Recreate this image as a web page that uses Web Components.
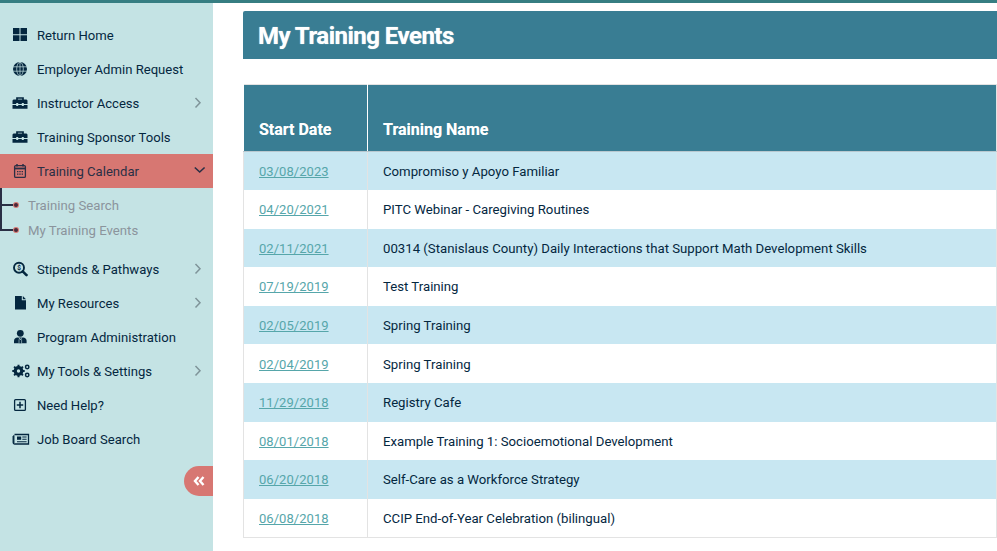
<!DOCTYPE html>
<html><head><meta charset="utf-8"><title>My Training Events</title>
<style>html,body{margin:0;padding:0;height:100%;overflow:hidden;background:#fff;font-family:Roboto,"Liberation Sans",sans-serif}</style>
</head><body>
<app-shell>
<side-nav slot="nav">
<nav-item label="Return Home" icon="grid"></nav-item>
<nav-item label="Employer Admin Request" icon="globe"></nav-item>
<nav-item label="Instructor Access" icon="toolbox" chevron="right"></nav-item>
<nav-item label="Training Sponsor Tools" icon="toolbox"></nav-item>
<nav-item label="Training Calendar" icon="calendar" chevron="down" active></nav-item>
<sub-nav><sub-item>Training Search</sub-item><sub-item>My Training Events</sub-item></sub-nav>
<nav-item label="Stipends &amp; Pathways" icon="search" chevron="right"></nav-item>
<nav-item label="My Resources" icon="file" chevron="right"></nav-item>
<nav-item label="Program Administration" icon="user"></nav-item>
<nav-item label="My Tools &amp; Settings" icon="cogs" chevron="right"></nav-item>
<nav-item label="Need Help?" icon="plus"></nav-item>
<nav-item label="Job Board Search" icon="news"></nav-item>
</side-nav>
<main-panel>
<page-title>My Training Events</page-title>
<events-table></events-table>
</main-panel>
</app-shell>
<script>
const ICONS={
grid:'<path d="M2 3h6.500v6.300H2zM9.500 3H16v6.300H9.500zM2 10.300h6.500V16H2zM9.500 10.300H16V16H9.500z" fill="#04273f"/>',
globe:'<circle cx="9" cy="10" r="7" fill="#04273f"/><path d="M2 7.800h14M2 12.200h14M9 3v14" stroke="#c4e3e4" stroke-width=".7"/><ellipse cx="9" cy="10" rx="3.300" ry="6.800" fill="none" stroke="#c4e3e4" stroke-width=".7"/>',
toolbox:'<path d="M6 7V5h6v2" fill="none" stroke="#04273f" stroke-width="1.700"/><path d="M2.500 6.500h13l1 1V11h-3.700v-1h-2v1H7.200v-1h-2v1H1.500V7.500z" fill="#04273f"/><path d="M1.500 12h3.700v1h2v-1h3.600v1h2v-1h3.700v3.800h-15z" fill="#04273f"/>',
calendar:'<rect x="3.600" y="4.600" width="10.800" height="11.800" rx="1.200" fill="none" stroke="#2a2f45" stroke-width="1.300"/><path d="M3 7.500h12" stroke="#2a2f45" stroke-width="1.800"/><path d="M6 3v2.500M12 3v2.500" stroke="#2a2f45" stroke-width="1.500"/><path d="M6 10h1.400v1.300H6zM8.300 10h1.400v1.300H8.300zM10.600 10h1.400v1.300h-1.400zM6 12.500h1.400v1.300H6zM8.300 12.500h1.400v1.300H8.300zM10.600 12.500h1.400v1.300h-1.400z" fill="#2a2f45"/>',
search:'<circle cx="8" cy="8.700" r="5" fill="none" stroke="#04273f" stroke-width="1.900"/><path d="M11.700 12.400l3.800 3.800" stroke="#04273f" stroke-width="2.600" stroke-linecap="round"/><text x="8" y="11" font-size="6.500" font-weight="700" font-family="Roboto" text-anchor="middle" fill="#04273f">$</text>',
file:'<path d="M4 3h6.800v4.200H15V16.500H4z" fill="#04273f"/><path d="M11.800 3L15 6.200h-3.200z" fill="#04273f"/>',
user:'<circle cx="9.300" cy="6.300" r="3.400" fill="#04273f"/><path d="M3 16.200v-2.400c0-2 1.600-3.300 3.500-3.300h5.600c1.900 0 3.500 1.300 3.500 3.300v2.400z" fill="#04273f"/><path d="M7.800 10.600l1.500 2.200 1.500-2.200" fill="none" stroke="#c4e3e4" stroke-width=".8"/><path d="M9.300 13v3.200" stroke="#04273f" stroke-width="1.600"/><path d="M8 12.300v3.900M10.600 12.300v3.900" stroke="#c4e3e4" stroke-width=".6"/>',
cogs:'<circle cx="7.500" cy="10" r="3.500" fill="none" stroke="#04273f" stroke-width="2.800"/><path d="M7.500 3.800v12.400M1.300 10h12.400M3.100 5.600l8.800 8.800M11.900 5.600l-8.800 8.800" stroke="#04273f" stroke-width="2"/><circle cx="7.500" cy="10" r="1.700" fill="#c4e3e4"/><circle cx="16.200" cy="6" r="1.700" fill="none" stroke="#04273f" stroke-width="1.500"/><circle cx="16.200" cy="14" r="1.700" fill="none" stroke="#04273f" stroke-width="1.500"/>',
plus:'<rect x="3.600" y="4.600" width="10.800" height="10.800" rx="1" fill="none" stroke="#04273f" stroke-width="1.300"/><path d="M9 6.800v6.400M5.800 10h6.400" stroke="#04273f" stroke-width="1.500"/>',
news:'<path d="M3.500 5.500h14v9.500H3.700a1.500 1.500 0 0 1-1.500-1.500V7" fill="none" stroke="#04273f" stroke-width="1.300"/><path d="M2.800 6.200v7.800" stroke="#04273f" stroke-width="1.300"/><path d="M6 7.500h4.200v3.300H6z" fill="#04273f"/><path d="M11.300 8h4.300M11.300 10.200h4.300M6 12.800h9.600" stroke="#04273f" stroke-width="1.100"/>'
};
const CHEV={right:'<path d="M1.500 1l4.500 4.700-4.500 4.700" fill="none" stroke="#7f9499" stroke-width="1.500"/>',down:'<path d="M.8 2.500L5.700 7l4.900-4.500" fill="none" stroke="#2a2f45" stroke-width="1.600"/>'};
function def(name,css,html,init){customElements.define(name,class extends HTMLElement{connectedCallback(){if(this.shadowRoot)return;const s=this.attachShadow({mode:'open'});s.innerHTML='<style>'+css+'</style>'+(typeof html==='function'?html(this):html);init&&init(this,s)}})}
def('app-shell',`:host{display:flex;flex-direction:column;height:551px;overflow:hidden;border-top:3px solid #367e82;box-sizing:border-box}
.row{display:flex;flex:1;min-height:0}`,`<div class="row"><slot name="nav"></slot><slot></slot></div>`);
def('side-nav',`:host{display:block;position:relative;flex:0 0 213px;width:213px;background:#c4e3e4;box-sizing:border-box;padding-top:15px;font:13.100px/20px Roboto,"Liberation Sans",sans-serif}
.collapse{position:absolute;right:0;top:463px;width:29px;height:30px;background:#d77772;border-radius:15px 0 0 15px;display:flex;align-items:center;justify-content:center}`,`<slot></slot><div class="collapse"><svg width="12" height="10" viewBox="0 0 12 10"><path d="M5.500 1L2 5l3.500 4M10.500 1L7 5l3.500 4" fill="none" stroke="#fff" stroke-width="2.400"/></svg></div>`);
def('nav-item',`:host{display:flex;align-items:center;height:34px;padding-left:11px;padding-right:7px;color:#04273f}
:host([active]){background:#d77772;color:#2a2f45}
svg.i{width:18px;height:20px;flex:none;margin-right:8px;overflow:visible}.t{flex:1;white-space:nowrap;padding-top:2px}svg.c{width:12px;height:12px;flex:none}`,
h=>`<svg class="i" viewBox="0 0 18 20">${ICONS[h.getAttribute('icon')]}</svg><span class="t">${h.getAttribute('label').replace(/&/g,'&amp;')}</span>${h.hasAttribute('chevron')?`<svg class="c" viewBox="0 0 12 12">${CHEV[h.getAttribute('chevron')]}</svg>`:''}`);
def('sub-nav',`:host{display:block;height:64px;position:relative;box-sizing:border-box;padding-top:4px}
:host::before{content:"";position:absolute;left:0;top:0;width:2px;height:43px;background:#2a2f45}`,`<slot></slot>`);
def('sub-item',`:host{display:flex;align-items:center;height:25px;box-sizing:border-box;padding:2px 0 0 28px;color:#8b949c;position:relative;white-space:nowrap;font-size:13.200px}
:host::before{content:"";position:absolute;left:0;top:12px;width:14px;height:2px;background:#2a2f45}
:host::after{content:"";position:absolute;left:14px;top:11px;width:4px;height:4px;border-radius:50%;background:#4a2a3a;box-shadow:0 0 0 1px #d77772}`,`<slot></slot>`);
def('main-panel',`:host{display:block;flex:1;min-width:0;box-sizing:border-box;padding:8px 0 0 30px}`,`<slot></slot>`);
def('page-title',`:host{display:flex;align-items:center;height:48px;box-sizing:border-box;padding:2px 0 0 15px;background:#397d93;color:#fff;font:700 24px/1 Roboto,"Liberation Sans",sans-serif;border-radius:2px 0 0 0;letter-spacing:-.52px;margin-bottom:25px;text-shadow:0 0 1px rgba(255,255,255,.7)}`,`<slot></slot>`);
const ROWS=[["03/08/2023","Compromiso y Apoyo Familiar"],["04/20/2021","PITC Webinar - Caregiving Routines"],["02/11/2021","00314 (Stanislaus County) Daily Interactions that Support Math Development Skills"],["07/19/2019","Test Training"],["02/05/2019","Spring Training"],["02/04/2019","Spring Training"],["11/29/2018","Registry Cafe"],["08/01/2018","Example Training 1: Socioemotional Development"],["06/20/2018","Self-Care as a Workforce Strategy"],["06/08/2018","CCIP End-of-Year Celebration (bilingual)"]];
def('events-table',`:host{display:block;font:13.200px/20px Roboto,"Liberation Sans",sans-serif;color:#04273f}
table{border-collapse:collapse;width:100%;table-layout:fixed;border:1px solid #e3e3e3}
th{background:#397d93;color:#fff;text-align:left;font:700 16px/20px Roboto,"Liberation Sans",sans-serif;height:67px;box-sizing:border-box;padding:0 15px 11px;vertical-align:bottom;border-left:1px solid #fff;border-bottom:1px solid #b9c8cf;text-shadow:0 0 .6px rgba(255,255,255,.6)}
td{height:38.600px;box-sizing:border-box;padding:1.500px 15px 0;border-left:1px solid #e3e3e3;white-space:nowrap}
tr:nth-child(odd) td{background:#c8e7f2}
a{color:#56a6aa;text-decoration:underline;font-size:13px;letter-spacing:.04px}
.d{width:124px}`,`<table><thead><tr><th class="d">Start Date</th><th>Training Name</th></tr></thead><tbody>${ROWS.map(r=>`<tr><td><a href="#">${r[0]}</a></td><td>${r[1]}</td></tr>`).join('')}</tbody></table>`);
</script>
</body></html>
